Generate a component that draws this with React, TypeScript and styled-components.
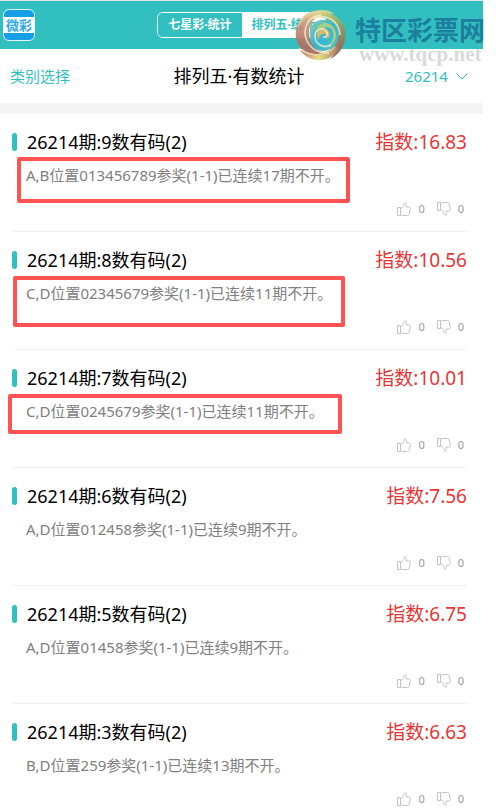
import React from "react";
import styled, { createGlobalStyle, css } from "styled-components";

const sans = `"Noto Sans", "Noto Sans CJK SC", sans-serif`;
const teal = "#32bfbf";

const GlobalStyle = createGlobalStyle`
  *, *::before, *::after { box-sizing: border-box; }
  body { margin: 0; background: #fff; font-family: ${sans}; }
  button, select { font-family: inherit; }
`;

const Page = styled.div`
  position: relative;
  margin-right: 13px;
`;

const TopBar = styled.header`
  display: grid;
  grid-template-columns: 1fr auto 1fr;
  align-items: center;
  height: 49px;
  padding: 0 3px;
  border-top: 1px solid #e2e2e2;
  background: ${teal};
`;

const LogoLink = styled.a`
  display: flex;
  width: 32px;
  height: 32px;
  overflow: hidden;
  flex-direction: column;
  justify-content: center;
  border: 1px solid #e4f6fb;
  border-radius: 6px;
  background: #169fe6;
  text-decoration: none;
`;

const LogoText = styled.span`
  background: #fff;
  color: #2fa8e6;
  font-size: 13px;
  font-weight: 700;
  line-height: 16px;
  text-align: center;
`;

const Tabs = styled.nav`
  display: flex;
  height: 26px;
  overflow: hidden;
  border: 1px solid #fff;
  border-radius: 6px;
`;

const Tab = styled.button<{ $active?: boolean }>`
  padding: 0 10px;
  border: 0;
  background: ${(p) => (p.$active ? "#fff" : teal)};
  color: ${(p) => (p.$active ? teal : "#fff")};
  font-size: 12px;
  font-weight: 700;
  line-height: 24px;
  white-space: nowrap;
`;

const SubBar = styled.div`
  display: grid;
  grid-template-columns: 1fr auto 1fr;
  align-items: center;
  height: 54px;
  padding: 0 15px 0 10px;
`;

const CategoryButton = styled.button`
  justify-self: start;
  padding: 0;
  border: 0;
  background: none;
  color: ${teal};
  font-size: 15px;
  line-height: 24px;
`;

const Title = styled.h1`
  margin: 0;
  font-size: 18px;
  font-weight: 400;
  line-height: 28px;
`;

const IssuePicker = styled.label`
  display: flex;
  align-items: center;
  justify-self: end;
  gap: 8px;
  color: ${teal};
`;

const IssueSelect = styled.select`
  padding: 0;
  border: 0;
  appearance: none;
  background: none;
  color: inherit;
  font-size: 15px;
  line-height: 24px;
`;

const List = styled.main`
  border-top: 11px solid #f4f4f4;
`;

const Item = styled.article`
  display: flex;
  flex-direction: column;
  margin: 0 16px 0 12px;
  padding: 14px 0 12px;
  border-bottom: 1px solid #f1f1f1;

  &:last-child {
    padding-bottom: 0;
    border-bottom: 0;
  }
`;

const ItemHead = styled.div`
  display: flex;
  align-items: center;
  height: 28px;
`;

const Marker = styled.span`
  width: 5px;
  height: 18px;
  margin-right: 10px;
  border-radius: 3px;
  background: ${teal};
`;

const ItemTitle = styled.h2`
  flex: 1;
  margin: 0;
  font-size: 18px;
  font-weight: 400;
  line-height: 28px;
`;

const Score = styled.span`
  color: #e53737;
  font-size: 19px;
  line-height: 28px;
`;

const Detail = styled.p`
  position: relative;
  align-self: flex-start;
  margin: 7px 0 12px 14px;
  color: #808080;
  font-size: 15px;
  line-height: 24px;
  white-space: nowrap;
`;

type Mark = "first" | "second" | "third";

const markInsets = {
  first: css`inset: -6px -10px -16px -9px;`,
  second: css`inset: -5px -13px -22px -13px;`,
  third: css`inset: -5px -18px -11px -18px;`,
};

const Highlight = styled.span<{ $mark: Mark }>`
  position: absolute;
  ${(p) => markInsets[p.$mark]}
  border: 4px solid #ff5252;
  border-radius: 2px;
`;

const Votes = styled.div`
  display: flex;
  align-items: center;
  justify-content: flex-end;
  gap: 12px;
  padding-right: 3px;
`;

const VoteButton = styled.button`
  display: flex;
  align-items: center;
  gap: 7px;
  height: 20px;
  padding: 0;
  border: 0;
  background: none;
  color: #999;
  font-size: 11px;
  line-height: 20px;
`;

const Watermark = styled.div`
  position: absolute;
  top: 9px;
  right: -2px;
  display: flex;
  gap: 8px;
  pointer-events: none;
`;

const WatermarkText = styled.div`
  display: flex;
  flex-direction: column;
  padding-top: 5px;
`;

const WatermarkName = styled.span`
  color: #1c7f9e;
  font-size: 26px;
  font-weight: 700;
  line-height: 32px;
`;

const WatermarkUrl = styled.span`
  padding-left: 4px;
  color: rgba(205, 205, 205, 0.75);
  font-family: "Liberation Serif", serif;
  font-size: 21px;
  font-weight: 700;
  line-height: 16px;
`;

const Thumb = ({ down = false }: { down?: boolean }) => (
  <svg width="14" height="14" viewBox="0 0 14 14" fill="none" stroke="#c4c4c4" strokeLinejoin="round" aria-hidden="true">
    <g transform={down ? "matrix(1 0 0 -1 0 14)" : undefined}>
      <path d="M.5 5.5h3v8h-3zM3.5 6.5c2-.8 3.4-2.4 3.6-4.7C7.2.2 9.5.3 9.4 2.4L9 5h3.3c1 0 1.4.7 1.2 1.5l-1.4 5.6c-.2.9-.7 1.4-1.5 1.4H5.2l-1.7-.8" />
    </g>
  </svg>
);

const Chevron = () => (
  <svg width="12" height="7" viewBox="0 0 12 7" fill="none" stroke={teal} aria-hidden="true">
    <path d="M.6.6 6 6 11.4.6" />
  </svg>
);

const Swirl = () => (
  <svg width="52" height="52" viewBox="0 0 52 52" aria-hidden="true">
    <defs>
      <linearGradient id="left" x1=".5" y1="0" x2=".3" y2="1">
        <stop offset="0" stopColor="#d9d68a" />
        <stop offset=".4" stopColor="#c98f78" />
        <stop offset="1" stopColor="#a3655c" />
      </linearGradient>
      <linearGradient id="right" x1="0" y1="0" x2=".6" y2="1">
        <stop offset="0" stopColor="#e3dc7c" />
        <stop offset=".5" stopColor="#8fae68" />
        <stop offset="1" stopColor="#8a6a5e" />
      </linearGradient>
      <linearGradient id="base" x1="0" y1="0" x2="1" y2="0">
        <stop offset="0" stopColor="#c0675b" />
        <stop offset=".45" stopColor="#dfdc78" />
        <stop offset="1" stopColor="#a06a5c" />
      </linearGradient>
      <linearGradient id="core" x1="0" y1="0" x2="1" y2="1">
        <stop offset="0" stopColor="#8fd0b0" />
        <stop offset=".5" stopColor="#35b5d2" />
        <stop offset="1" stopColor="#54c6c0" />
      </linearGradient>
    </defs>
    <path d="M1 30C-1 14 10 1 26 1c6 0 10 1 13 4C24 3 13 12 14 25c1 11 8 18 18 19C18 48 4 43 1 30Z" fill="url(#left)" opacity=".92" />
    <path d="M17 9C26 0 43 3 49 17c5 13-2 28-14 33 8-8 12-19 8-29C39 11 28 6 17 9Z" fill="url(#right)" opacity=".95" />
    <path d="M5 41c9 6 24 7 35-5 3-4 4-8 4-12 5 14-5 27-19 27-9 0-16-4-20-10Z" fill="url(#base)" opacity=".92" />
    <path d="M15 27c-2-11 7-18 16-16 9 1 15 10 12 19-3 10-14 15-22 10-3-3-5-8-6-13Z" fill="url(#core)" />
    <path d="M21 25c-1-9 8-14 15-9 8 6 6 18-3 22 5-6 7-12 4-17-4-5-11-3-16 4Z" fill="#a8cf84" />
    <path d="M24 31c-5-7 1-13 7-11 5 2 5 9 0 10 2-3 0-6-3-5-3 0-4 3-4 6Z" fill="#d9b96c" />
    <path d="M26 6C12 7 7 21 12 32c4 8 12 13 22 12M18 9c14-5 26 3 27 17M28 28c3 1 6-3 3-6-3-4-11-2-11 5 0 8 8 13 16 9" fill="none" stroke="#f4ecd4" strokeWidth="1.5" opacity=".85" />
    <path d="M3 18C6 9 15 3 25 3M4 39c10 9 26 9 36-1" fill="none" stroke="#f1d7a8" strokeWidth="1.5" opacity=".7" />
  </svg>
);

const items: { count: number; detail: string; score: string; mark?: Mark }[] = [
  { count: 9, detail: "A,B位置013456789参奖(1-1)已连续17期不开。", score: "16.83", mark: "first" },
  { count: 8, detail: "C,D位置02345679参奖(1-1)已连续11期不开。", score: "10.56", mark: "second" },
  { count: 7, detail: "C,D位置0245679参奖(1-1)已连续11期不开。", score: "10.01", mark: "third" },
  { count: 6, detail: "A,D位置012458参奖(1-1)已连续9期不开。", score: "7.56" },
  { count: 5, detail: "A,D位置01458参奖(1-1)已连续9期不开。", score: "6.75" },
  { count: 3, detail: "B,D位置259参奖(1-1)已连续13期不开。", score: "6.63" },
];

export default function App() {
  return (
    <Page lang="zh-CN">
      <GlobalStyle />
      <TopBar>
        <LogoLink href="#"><LogoText>微彩</LogoText></LogoLink>
        <Tabs>
          <Tab>七星彩·统计</Tab>
          <Tab $active>排列五·统计</Tab>
        </Tabs>
      </TopBar>
      <SubBar>
        <CategoryButton>类别选择</CategoryButton>
        <Title>排列五·有数统计</Title>
        <IssuePicker>
          <IssueSelect aria-label="期号" defaultValue="26214">
            <option>26214</option>
          </IssueSelect>
          <Chevron />
        </IssuePicker>
      </SubBar>
      <List>
        {items.map((item) => (
          <Item key={item.count}>
            <ItemHead>
              <Marker />
              <ItemTitle>26214期:{item.count}数有码(2)</ItemTitle>
              <Score>指数:{item.score}</Score>
            </ItemHead>
            <Detail>
              {item.detail}
              {item.mark && <Highlight $mark={item.mark} />}
            </Detail>
            <Votes>
              <VoteButton aria-label="赞 0"><Thumb />0</VoteButton>
              <VoteButton aria-label="踩 0"><Thumb down />0</VoteButton>
            </Votes>
          </Item>
        ))}
      </List>
      <Watermark>
        <Swirl />
        <WatermarkText>
          <WatermarkName>特区彩票网</WatermarkName>
          <WatermarkUrl>www.tqcp.net</WatermarkUrl>
        </WatermarkText>
      </Watermark>
    </Page>
  );
}
